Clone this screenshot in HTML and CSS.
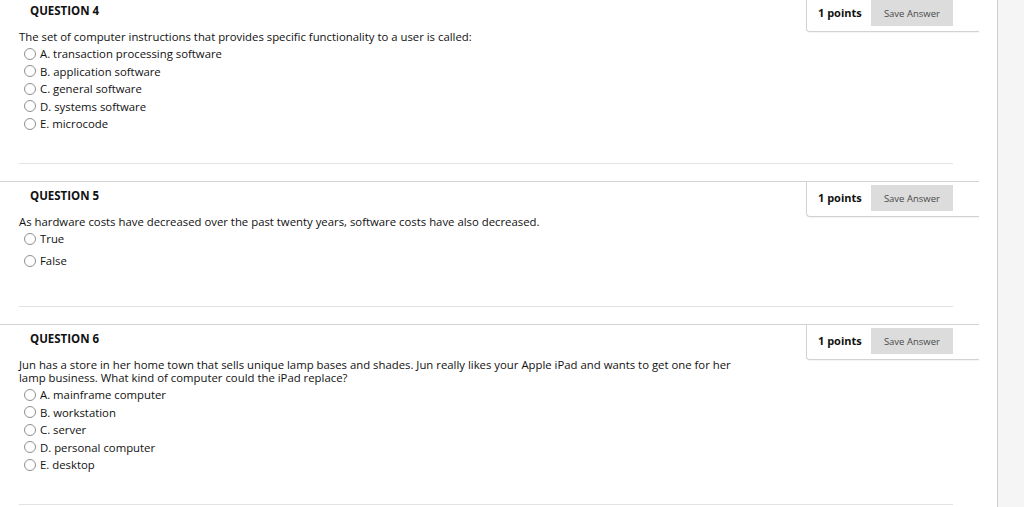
FILE: index.html
```html
<!DOCTYPE html>
<html lang="en">
<head>
<meta charset="utf-8">
<title>Quiz</title>
<link rel="stylesheet" href="styles.css">
</head>
<body>
<div class="layout">
  <main class="main">
    <section class="question first">
      <div class="q-header">
        <h3 class="q-title">QUESTION 4</h3>
        <div class="points-box">
          <span class="points">1 points</span>
          <button class="save-btn" type="button">Save Answer</button>
        </div>
      </div>
      <div class="q-body">
        <p class="q-text">The set of computer instructions that provides specific functionality to a user is called:</p>
        <ul class="options">
          <li class="option"><span class="radio"></span>A. transaction processing software</li>
          <li class="option"><span class="radio"></span>B. application software</li>
          <li class="option"><span class="radio"></span>C. general software</li>
          <li class="option"><span class="radio"></span>D. systems software</li>
          <li class="option"><span class="radio"></span>E. microcode</li>
        </ul>
      </div>
    </section>

    <section class="question">
      <div class="q-header">
        <h3 class="q-title">QUESTION 5</h3>
        <div class="points-box">
          <span class="points">1 points</span>
          <button class="save-btn" type="button">Save Answer</button>
        </div>
      </div>
      <div class="q-body tf-body">
        <p class="q-text">As hardware costs have decreased over the past twenty years, software costs have also decreased.</p>
        <ul class="options tf">
          <li class="option"><span class="radio"></span>True</li>
          <li class="option"><span class="radio"></span>False</li>
        </ul>
      </div>
    </section>

    <section class="question">
      <div class="q-header">
        <h3 class="q-title">QUESTION 6</h3>
        <div class="points-box">
          <span class="points">1 points</span>
          <button class="save-btn" type="button">Save Answer</button>
        </div>
      </div>
      <div class="q-body">
        <p class="q-text wrap">Jun has a store in her home town that sells unique lamp bases and shades. Jun really likes your Apple iPad and wants to get one for her lamp business. What kind of computer could the iPad replace?</p>
        <ul class="options">
          <li class="option"><span class="radio"></span>A. mainframe computer</li>
          <li class="option"><span class="radio"></span>B. workstation</li>
          <li class="option"><span class="radio"></span>C. server</li>
          <li class="option"><span class="radio"></span>D. personal computer</li>
          <li class="option"><span class="radio"></span>E. desktop</li>
        </ul>
      </div>
    </section>
  </main>
  <aside class="sidebar"></aside>
</div>
</body>
</html>
```
FILE: styles.css
```css
html, body {
  margin: 0;
  padding: 0;
  background: #ffffff;
}
body {
  font-family: "Open Sans", "Liberation Sans", sans-serif;
  font-size: 11.35px;
  color: #111;
  overflow: hidden;
  height: 507px;
}
.layout {
  display: flex;
  height: 507px;
}
.main {
  flex: 0 0 997px;
  margin-top: -4px;
}
.sidebar {
  flex: 1;
  background: #f5f5f5;
  border-left: 1px solid #cfcfcf;
}
.question {
  margin-right: 18px;
  margin-bottom: 17.5px;
}
.q-header {
  display: flex;
  justify-content: space-between;
  align-items: flex-start;
  border-top: 1px solid #d2d2d2;
}
.q-title {
  margin: 0;
  padding: 6px 0 0 30px;
  font-size: 11.5px;
  font-weight: 700;
  line-height: 16px;
  color: #111;
}
.points-box {
  display: flex;
  align-items: center;
  width: 173px;
  box-sizing: border-box;
  padding: 3px 26px 5px 11px;
  border-left: 1px solid #d2d2d2;
  border-bottom: 1px solid #d2d2d2;
  border-bottom-left-radius: 4px;
  box-shadow: 0 1px 1px rgba(0,0,0,0.05);
  gap: 9px;
}
.points {
  font-weight: 700;
  font-size: 11px;
  color: #111;
  white-space: nowrap;
  position: relative;
  top: -1px;
}
.save-btn {
  margin-left: auto;
  width: 83px;
  height: 26px;
  border: none;
  background: #dcdcdc;
  color: #4a4a4a;
  font-family: "Open Sans", "Liberation Sans", sans-serif;
  font-size: 9.5px;
  padding: 0;
}
.q-body {
  margin-left: 19px;
  width: 934px;
  border-bottom: 1px solid #e2e2e2;
  padding-bottom: 30px;
  margin-top: -2px;
}
.tf-body {
  padding-bottom: 36px;
}
.q-text {
  margin: 0;
  line-height: 13px;
}
.q-text.wrap {
  max-width: 725px;
}
.options {
  list-style: none;
  margin: 0;
  padding: 2px 0 0 5px;
  display: flex;
  flex-direction: column;
}
.options.tf {
  gap: 4.5px;
}
.option {
  display: flex;
  align-items: center;
  height: 17.5px;
  line-height: 13px;
}
.radio {
  width: 10px;
  height: 10px;
  border: 1px solid #8f8f8f;
  border-radius: 50%;
  background: #fff;
  margin-right: 4px;
  flex: 0 0 auto;
}
```
